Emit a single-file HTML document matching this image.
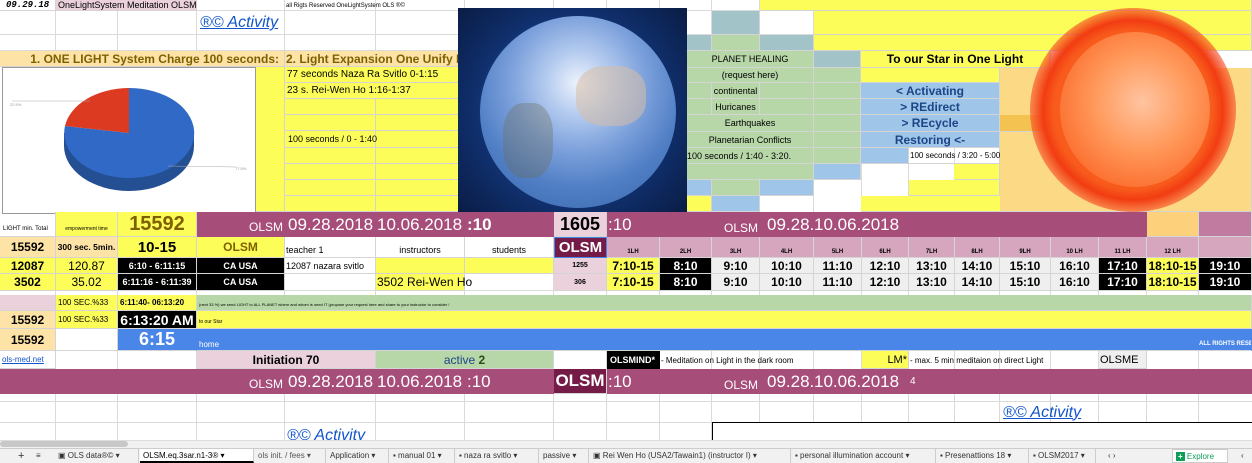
<!DOCTYPE html>
<html><head><meta charset="utf-8"><style>
*{margin:0;padding:0;box-sizing:border-box}
body{width:1252px;height:463px;overflow:hidden;background:#fff;position:relative;font-family:"Liberation Sans",Arial,sans-serif;color:#000}
.c{position:absolute;border-right:1px solid #d4d4d4;border-bottom:1px solid #d4d4d4;overflow:hidden;white-space:nowrap;display:flex;align-items:center}
.R{position:absolute;left:0;width:1252px}
.R>.c{top:0;height:100%}
.vl{position:absolute;top:0;width:1px;height:440px;background:#dadada}
.hl{position:absolute;left:0;height:1px;width:1252px;background:#dadada}
.ov{position:absolute;width:1px;background:rgba(0,0,0,.07);z-index:3}
.y{background:#fdfd5a}.g{background:#b7d7a8}.lb{background:#9fc5e8}.tl{background:#a2c4c9}.lo{background:#fde3a6}.or{background:#fcd985}
.p{background:#a64d79;color:#fff;border:0}.pk{background:#ead1dc}.dp{background:#741b47;color:#fff}.pl{background:#d5a6bd}
.bk{background:#000;color:#fff}.gr{background:#efefef}.bl{background:#4a86e8;color:#fff;border-right-color:#4a86e8}
.ctr{justify-content:center}.r{justify-content:flex-end}.b{font-weight:bold}
.t{font-size:6px;justify-content:center;font-weight:bold;align-items:flex-end;padding-bottom:2px}
.tm{font-size:12px;font-weight:bold;justify-content:center}
.tab{position:absolute;top:449px;height:14px;font-size:8px;color:#333;line-height:14px;border-right:1px solid #ccc;padding-left:3px;white-space:nowrap;overflow:hidden}
</style></head><body>
<div class="vl" style="left:55px"></div><div class="vl" style="left:117px"></div><div class="vl" style="left:196px"></div><div class="vl" style="left:284px"></div><div class="vl" style="left:375px"></div><div class="vl" style="left:464px"></div><div class="vl" style="left:553px"></div><div class="vl" style="left:606px"></div><div class="vl" style="left:659px"></div><div class="vl" style="left:711px"></div><div class="vl" style="left:759px"></div><div class="vl" style="left:813px"></div><div class="vl" style="left:861px"></div><div class="vl" style="left:908px"></div><div class="vl" style="left:954px"></div><div class="vl" style="left:999px"></div><div class="vl" style="left:1050px"></div><div class="vl" style="left:1098px"></div><div class="vl" style="left:1146px"></div><div class="vl" style="left:1198px"></div>
<div class="hl" style="top:10px"></div><div class="hl" style="top:34px"></div><div class="hl" style="top:50px"></div><div class="hl" style="top:290px"></div><div class="hl" style="top:393px"></div><div class="hl" style="top:401px"></div><div class="hl" style="top:422px"></div>

<div class="c" style="left:0;top:0;width:56px;height:11px;font:italic bold 9px 'Liberation Mono',monospace;padding-left:6px">09.29.18</div>
<div class="c pk" style="left:56px;top:0;width:141px;height:11px;font-size:9px;padding-left:2px">OneLightSystem Meditation OLSM</div>
<div class="c" style="left:285px;top:0;width:174px;height:11px;font-size:6px;padding-left:1px;border:0">all Rigts Reserved OneLightSystem OLS ®©</div>
<div class="c" style="left:200px;top:11px;width:150px;height:24px;font-size:16px;font-style:italic;color:#1155cc;text-decoration:underline;border:0">®© Activity</div>
<div class="c y" style="left:760px;top:0;width:492px;height:11px"></div>
<div class="c tl" style="left:712px;top:11px;width:48px;height:24px"></div>
<div class="c y" style="left:814px;top:11px;width:438px;height:24px"></div>
<div class="c tl" style="left:687px;top:35px;width:25px;height:16px"></div>
<div class="c g" style="left:712px;top:35px;width:48px;height:16px"></div>
<div class="c tl" style="left:760px;top:35px;width:54px;height:16px"></div>
<div class="c y" style="left:814px;top:35px;width:438px;height:16px"></div>
<div class="c lo r b" style="left:0;top:51px;width:285px;height:16px;font-size:12px;color:#7f6000;padding-right:5px">1. ONE LIGHT System Charge 100 seconds:</div>
<div class="c lo b" style="left:285px;top:51px;width:175px;height:16px;font-size:12px;color:#7f6000;padding-left:1px">2. Light Expansion One Unify Planet</div>
<div class="c y" style="left:255px;top:67px;width:30px;height:145px"></div>
<div class="c y" style="left:285px;top:67px;width:175px;height:16px;font-size:10px;padding-left:2px">77 seconds Naza Ra Svitlo 0-1:15</div>
<div class="c y" style="left:285px;top:83px;width:175px;height:16px;font-size:10px;padding-left:2px">23 s. Rei-Wen Ho 1:16-1:37</div>
<div class="c y" style="left:285px;top:99px;width:91px;height:16px"></div><div class="c y" style="left:376px;top:99px;width:84px;height:16px"></div>
<div class="c y" style="left:285px;top:115px;width:91px;height:16px"></div><div class="c y" style="left:376px;top:115px;width:84px;height:16px"></div>
<div class="c y" style="left:285px;top:131px;width:91px;height:17px;font-size:9px;padding-left:3px;overflow:visible;z-index:2">100 seconds / 0 - 1:40</div><div class="c y" style="left:376px;top:131px;width:84px;height:17px"></div>
<div class="c y" style="left:285px;top:148px;width:91px;height:16px"></div><div class="c y" style="left:376px;top:148px;width:84px;height:16px"></div>
<div class="c y" style="left:285px;top:164px;width:91px;height:16px"></div><div class="c y" style="left:376px;top:164px;width:84px;height:16px"></div>
<div class="c y" style="left:285px;top:180px;width:91px;height:16px"></div><div class="c y" style="left:376px;top:180px;width:84px;height:16px"></div>
<div class="c y" style="left:285px;top:196px;width:91px;height:16px"></div><div class="c y" style="left:376px;top:196px;width:84px;height:16px"></div>
<div style="position:absolute;left:2px;top:67px;width:254px;height:147px;background:#fff;border:1px solid #999">
<svg width="254" height="147" viewBox="2 67 254 147" style="position:absolute;left:-1px;top:-1px">
<path d="M64 133 L64 146 A65 45 0 0 0 194 146 L194 133 Z" fill="#244f93"/>
<path d="M129 133 L129 88 A65 45 0 1 1 65 126 Z" fill="#3069c6"/>
<path d="M129 133 L65 126 A65 45 0 0 1 129 88 Z" fill="#dd3a22"/>
<line x1="12" y1="101" x2="90" y2="101" stroke="#aaa" stroke-width=".6"/>
<line x1="168" y1="166" x2="236" y2="167" stroke="#aaa" stroke-width=".6"/>
<text x="10" y="106" font-size="4" fill="#999" font-family="Liberation Sans">22.5%</text>
<text x="235" y="170" font-size="4" fill="#999" font-family="Liberation Sans">77.5%</text>
</svg></div>
<div style="position:absolute;left:458px;top:8px;width:229px;height:204px;background:radial-gradient(circle at 50% 50%,#6a9ce0 0,#3d6fc4 40%,#24509c 50%,#10306e 62%,#0a1c44 100%);overflow:hidden">
<div style="position:absolute;left:22px;top:8px;width:196px;height:192px;border-radius:50%;background:radial-gradient(circle at 50% 35%,#eef3fd 0,#b4cbef 20%,#7ea2dc 42%,#5280c6 65%,#3563a8 100%)"></div>
<div style="position:absolute;left:118px;top:58px;width:70px;height:60px;border-radius:40%;background:rgba(215,190,165,.55)"></div>
<div style="position:absolute;left:45px;top:95px;width:50px;height:75px;border-radius:40%;background:rgba(110,110,90,.35)"></div>
</div>
<div class="c g ctr" style="left:687px;top:51px;width:127px;height:17px;font-size:9px">PLANET HEALING</div>
<div class="c tl" style="left:814px;top:51px;width:47px;height:17px"></div>
<div class="c y ctr b" style="left:861px;top:51px;width:189px;height:17px;font-size:12px">To our Star in One Light</div>
<div class="c g ctr" style="left:687px;top:68px;width:127px;height:15px;font-size:9px">(request here)</div><div class="c g" style="left:814px;top:68px;width:47px;height:15px"></div>
<div class="c y" style="left:861px;top:68px;width:139px;height:15px"></div>
<div class="c g" style="left:687px;top:83px;width:25px;height:16px"></div><div class="c g ctr" style="left:712px;top:83px;width:48px;height:16px;font-size:9px">continental</div><div class="c g" style="left:760px;top:83px;width:54px;height:16px"></div><div class="c g" style="left:814px;top:83px;width:47px;height:16px"></div>
<div class="c g" style="left:687px;top:99px;width:25px;height:16px"></div><div class="c g ctr" style="left:712px;top:99px;width:48px;height:16px;font-size:9px">Huricanes</div><div class="c g" style="left:760px;top:99px;width:54px;height:16px"></div><div class="c g" style="left:814px;top:99px;width:47px;height:16px"></div>
<div class="c g ctr" style="left:687px;top:115px;width:127px;height:17px;font-size:9px">Earthquakes</div><div class="c g" style="left:814px;top:115px;width:47px;height:17px"></div>
<div class="c g ctr" style="left:687px;top:132px;width:127px;height:16px;font-size:9px">Planetarian Conflicts</div><div class="c g" style="left:814px;top:132px;width:47px;height:16px"></div>
<div class="c g" style="left:687px;top:148px;width:127px;height:16px;font-size:9px">100 seconds / 1:40 - 3:20.</div><div class="c g" style="left:814px;top:148px;width:47px;height:16px"></div>
<div class="c lb ctr b" style="left:861px;top:83px;width:139px;height:16px;font-size:12px;color:#1c4587">&lt; Activating</div>
<div class="c lb ctr b" style="left:861px;top:99px;width:139px;height:16px;font-size:12px;color:#1c4587">&gt; REdirect</div>
<div class="c lb ctr b" style="left:861px;top:115px;width:139px;height:17px;font-size:12px;color:#1c4587">&gt; REcycle</div>
<div class="c lb ctr b" style="left:861px;top:132px;width:139px;height:16px;font-size:12px;color:#1c4587">Restoring &lt;-</div>
<div class="c lb" style="left:861px;top:148px;width:48px;height:16px"></div>
<div class="c" style="left:909px;top:148px;width:91px;height:16px;font-size:8px;padding-left:1px;overflow:visible;z-index:2">100 seconds / 3:20 - 5:00</div>
<div class="c g" style="left:687px;top:164px;width:127px;height:16px"></div><div class="c lb" style="left:814px;top:164px;width:47px;height:16px"></div>
<div class="c y" style="left:954px;top:164px;width:46px;height:16px"></div>
<div class="c lb" style="left:687px;top:180px;width:25px;height:16px"></div><div class="c g" style="left:712px;top:180px;width:48px;height:16px"></div><div class="c lb" style="left:760px;top:180px;width:54px;height:16px"></div>
<div class="c y" style="left:909px;top:180px;width:91px;height:16px"></div>
<div class="c y" style="left:687px;top:196px;width:25px;height:16px"></div><div class="c lb" style="left:712px;top:196px;width:48px;height:16px"></div>
<div class="c y" style="left:861px;top:196px;width:189px;height:16px"></div>
<div class="c or" style="left:1000px;top:68px;width:252px;height:144px"></div>
<div class="c" style="left:1000px;top:115px;width:50px;height:17px;background:#f3c250"></div>
<div style="position:absolute;left:1030px;top:8px;width:206px;height:204px;border-radius:50%;background:radial-gradient(circle,#ff7b2e 0,#f85a1c 55%,#f23c12 62%,rgba(245,70,30,.6) 70%,rgba(252,217,133,0) 100%)"></div>
<div style="position:absolute;left:1060px;top:32px;width:150px;height:155px;border-radius:50%;background:radial-gradient(circle at 55% 45%,#ffc4a0 0,#ff9a5c 40%,#fb6a2a 80%,#f24f1c 100%)"></div>

<div class="R" style="top:212px;height:25px">
<div class="c" style="left:0;width:56px;font-size:6px;align-items:flex-end;padding:0 0 4px 3px">LIGHT min. Total</div>
<div class="c y ctr" style="left:56px;width:62px;font-size:5px;align-items:flex-end;padding-bottom:4px">empowerment time</div>
<div class="c y ctr b" style="left:118px;width:79px;font-size:20px;color:#7f6000">15592</div>
<div class="c p" style="left:197px;width:357px"></div>
<div class="c p" style="left:197px;width:88px;justify-content:flex-end;align-items:flex-end;font-size:12px;padding:0 2px 3px 0">OLSM</div>
<div class="c p" style="left:285px;width:91px;font-size:17px;padding-left:3px">09.28.2018</div>
<div class="c p" style="left:376px;width:89px;font-size:17px;padding-left:1px">10.06.2018</div>
<div class="c p b" style="left:465px;width:89px;font-size:17px;padding-left:2px">:10</div>
<div class="c pk ctr b" style="left:554px;width:53px;font-size:18px">1605</div>
<div class="c p" style="left:607px;width:540px"></div>
<div class="c p" style="left:607px;width:53px;font-size:17px;padding-left:1px">:10</div>
<div class="c p" style="left:724px;width:36px;font-size:12px;align-items:flex-end;padding-bottom:2px">OLSM</div>
<div class="c p" style="left:767px;width:47px;font-size:17px">09.28.2</div>
<div class="c p" style="left:814px;width:95px;font-size:17px;overflow:visible">10.06.2018</div>
<div class="c" style="left:1147px;width:52px;background:#fdd17c"></div>
<div class="c" style="left:1199px;width:53px;background:#c27ba0"></div>
</div>
<div class="R" style="top:237px;height:21px">
<div class="c lo ctr b" style="left:0;width:56px;font-size:12px">15592</div>
<div class="c lo ctr b" style="left:56px;width:62px;font-size:8.5px">300 sec. 5min.</div>
<div class="c y ctr b" style="left:118px;width:79px;font-size:15px">10-15</div>
<div class="c y ctr b" style="left:197px;width:88px;font-size:12px;color:#7f6000">OLSM</div>
<div class="c" style="left:285px;width:91px;font-size:9px;align-items:flex-end;padding:0 0 2px 1px">teacher 1</div>
<div class="c ctr" style="left:376px;width:89px;font-size:9px;align-items:flex-end;padding-bottom:2px">instructors</div>
<div class="c ctr" style="left:465px;width:89px;font-size:9px;align-items:flex-end;padding-bottom:2px">students</div>
<div class="c dp ctr b" style="left:554px;width:53px;font-size:15px;border:1px solid #4a86e8">OLSM</div>
<div class="c pl t" style="left:607px;width:53px">1LH</div><div class="c pl t" style="left:660px;width:52px">2LH</div><div class="c pl t" style="left:712px;width:48px">3LH</div><div class="c pl t" style="left:760px;width:54px">4LH</div><div class="c pl t" style="left:814px;width:48px">5LH</div><div class="c pl t" style="left:862px;width:47px">6LH</div><div class="c pl t" style="left:909px;width:46px">7LH</div><div class="c pl t" style="left:955px;width:45px">8LH</div><div class="c pl t" style="left:1000px;width:51px">9LH</div><div class="c pl t" style="left:1051px;width:48px">10 LH</div><div class="c pl t" style="left:1099px;width:48px">11 LH</div><div class="c pl t" style="left:1147px;width:52px">12 LH</div><div class="c pl" style="left:1199px;width:53px"></div>
</div>
<div class="R" style="top:258px;height:16px">
<div class="c y ctr b" style="left:0;width:56px;font-size:12px">12087</div>
<div class="c y ctr" style="left:56px;width:62px;font-size:12px">120.87</div>
<div class="c bk ctr b" style="left:118px;width:79px;font-size:9px">6:10 - 6:11:15</div>
<div class="c bk ctr b" style="left:197px;width:88px;font-size:9px">CA USA</div>
<div class="c" style="left:285px;width:91px;font-size:9px;padding-left:1px">12087 nazara svitlo</div>
<div class="c y" style="left:376px;width:89px"></div><div class="c y" style="left:465px;width:89px"></div>
<div class="c pk ctr b" style="left:554px;width:53px;font-size:7px">1255</div>
<div class="c y tm" style="left:607px;width:53px">7:10-15</div><div class="c bk tm" style="left:660px;width:52px">8:10</div><div class="c gr tm" style="left:712px;width:48px">9:10</div><div class="c gr tm" style="left:760px;width:54px">10:10</div><div class="c gr tm" style="left:814px;width:48px">11:10</div><div class="c gr tm" style="left:862px;width:47px">12:10</div><div class="c gr tm" style="left:909px;width:46px">13:10</div><div class="c gr tm" style="left:955px;width:45px">14:10</div><div class="c gr tm" style="left:1000px;width:51px">15:10</div><div class="c gr tm" style="left:1051px;width:48px">16:10</div><div class="c bk tm" style="left:1099px;width:48px">17:10</div><div class="c y tm" style="left:1147px;width:52px">18:10-15</div><div class="c bk tm" style="left:1199px;width:53px">19:10</div>
</div>
<div class="R" style="top:274px;height:17px">
<div class="c y ctr b" style="left:0;width:56px;font-size:12px">3502</div>
<div class="c y ctr" style="left:56px;width:62px;font-size:12px">35.02</div>
<div class="c bk ctr b" style="left:118px;width:79px;font-size:9px">6:11:16 - 6:11:39</div>
<div class="c bk ctr b" style="left:197px;width:88px;font-size:9px">CA USA</div>
<div class="c y" style="left:376px;width:89px;font-size:12px;padding-left:1px;overflow:visible;z-index:2">3502 Rei-Wen Ho</div>
<div class="c pk ctr b" style="left:554px;width:53px;font-size:7px">306</div>
<div class="c y tm" style="left:607px;width:53px">7:10-15</div><div class="c bk tm" style="left:660px;width:52px">8:10</div><div class="c gr tm" style="left:712px;width:48px">9:10</div><div class="c gr tm" style="left:760px;width:54px">10:10</div><div class="c gr tm" style="left:814px;width:48px">11:10</div><div class="c gr tm" style="left:862px;width:47px">12:10</div><div class="c gr tm" style="left:909px;width:46px">13:10</div><div class="c gr tm" style="left:955px;width:45px">14:10</div><div class="c gr tm" style="left:1000px;width:51px">15:10</div><div class="c gr tm" style="left:1051px;width:48px">16:10</div><div class="c bk tm" style="left:1099px;width:48px">17:10</div><div class="c y tm" style="left:1147px;width:52px">18:10-15</div><div class="c bk tm" style="left:1199px;width:53px">19:10</div>
</div>
<div class="R" style="top:295px;height:16px">
<div class="c pk" style="left:0;width:56px"></div>
<div class="c y" style="left:56px;width:62px;font-size:8px;padding-left:2px">100 SEC.%33</div>
<div class="c y b" style="left:118px;width:79px;font-size:8px;padding-left:2px">6:11:40- 06:13:20</div>
<div class="c g" style="left:197px;width:1055px;font-size:4px;align-items:flex-end;padding:0 0 3px 2px">(next 33 %) we send LIGHT to ALL PLANET where and whom is need IT (propose your request here and share to your instructor to consider !</div>
</div>
<div class="R" style="top:311px;height:18px">
<div class="c lo ctr b" style="left:0;width:56px;font-size:12px">15592</div>
<div class="c y" style="left:56px;width:62px;font-size:8px;padding-left:2px">100 SEC.%33</div>
<div class="c bk ctr b" style="left:118px;width:79px;font-size:14px">6:13:20 AM</div>
<div class="c y" style="left:197px;width:1055px;font-size:5px;align-items:flex-end;padding:0 0 3px 2px">to our Star</div>
</div>
<div class="R" style="top:329px;height:22px">
<div class="c lo ctr b" style="left:0;width:56px;font-size:12px">15592</div>
<div class="c" style="left:56px;width:62px"></div>
<div class="c bl ctr b" style="left:118px;width:79px;font-size:18px">6:15</div>
<div class="c bl" style="left:197px;width:1055px;font-size:8px;align-items:flex-end;padding:0 0 1px 2px">home</div>
<div class="c bl b" style="left:1199px;width:53px;font-size:6px;align-items:flex-end;padding-bottom:3px">ALL RIGHTS RESERVED</div>
</div>
<div class="R" style="top:351px;height:18px">
<div class="c" style="left:0;width:56px;font-size:8px;color:#1155cc;text-decoration:underline;padding-left:2px">ols-med.net</div>
<div class="c pk ctr b" style="left:197px;width:179px;font-size:12px">Initiation 70</div>
<div class="c g ctr" style="left:376px;width:178px;font-size:12px;color:#1c4587">active&nbsp;<b style="color:#274e13">2</b></div>
<div class="c bk b" style="left:607px;width:53px;font-size:9px;padding-left:3px;border:0">OLSMIND*</div>
<div class="c" style="left:660px;width:202px;font-size:8px;padding-left:1px;border:0">- Meditation on Light in the dark room</div>
<div class="c y r" style="left:862px;width:47px;font-size:11px;padding-right:1px">LM*</div>
<div class="c" style="left:909px;width:190px;font-size:8px;padding-left:1px;border:0">- max. 5 min meditaion on direct Light</div>
<div class="c gr" style="left:1099px;width:48px;font-size:11px;padding-left:1px">OLSME</div>
</div>
<div class="R" style="top:369px;height:25px">
<div class="c p" style="left:0;width:1252px"></div>
<div class="c p" style="left:197px;width:88px;justify-content:flex-end;align-items:flex-end;font-size:12px;padding:0 2px 3px 0;background:none">OLSM</div>
<div class="c p" style="left:285px;width:91px;font-size:17px;padding-left:3px;background:none">09.28.2018</div>
<div class="c p" style="left:376px;width:89px;font-size:17px;padding-left:1px;background:none">10.06.2018</div>
<div class="c p" style="left:465px;width:89px;font-size:17px;padding-left:2px;background:none">:10</div>
<div class="c dp ctr b" style="left:554px;width:53px;font-size:17px">OLSM</div>
<div class="c p" style="left:607px;width:53px;font-size:17px;padding-left:1px;background:none">:10</div>
<div class="c p" style="left:724px;width:36px;font-size:12px;align-items:flex-end;padding-bottom:2px;background:none">OLSM</div>
<div class="c p" style="left:767px;width:47px;font-size:17px;background:none">09.28.2</div>
<div class="c p" style="left:814px;width:95px;font-size:17px;overflow:visible;background:none">10.06.2018</div>
<div class="c p" style="left:910px;width:20px;font-size:10px;background:none">4</div>
</div>
<div class="c" style="left:1003px;top:402px;width:120px;height:21px;font-size:16px;font-style:italic;color:#1155cc;text-decoration:underline;border:0">®© Activity</div>
<div class="c" style="left:287px;top:426px;width:120px;height:14px;font-size:16px;font-style:italic;color:#1155cc;text-decoration:underline;border:0;align-items:flex-start;line-height:20px">®© Activity</div>
<div style="position:absolute;left:712px;top:422px;width:540px;height:18px;border-top:1px solid #000;border-left:1px solid #000;background:#fff"></div>
<div style="position:absolute;left:0;top:440px;width:1252px;height:8px;background:#f1f1f1;border-top:1px solid #ddd"></div>
<div style="position:absolute;left:0;top:441px;width:128px;height:6px;background:#c8c8c8;border-radius:3px"></div>
<div style="position:absolute;left:0;top:448px;width:1252px;height:15px;background:#f1f1f1;border-top:1px solid #ccc"></div>
<div class="tab" style="left:15px;border:0;font-size:11px">+</div><div class="tab" style="left:33px;border:0">≡</div>
<div class="tab" style="left:55px;width:84px">▣ OLS data®©  ▾</div>
<div class="tab" style="left:140px;width:114px;background:#fff;color:#000;border-bottom:2px solid #000">OLSM.eq.3sar.n1-3®  ▾</div>
<div class="tab" style="left:255px;width:71px;color:#555">ols init. / fees  ▾</div>
<div class="tab" style="left:327px;width:62px">Application  ▾</div>
<div class="tab" style="left:390px;width:65px">▪ manual 01  ▾</div>
<div class="tab" style="left:456px;width:83px">▪ naza ra svitlo  ▾</div>
<div class="tab" style="left:540px;width:49px">passive  ▾</div>
<div class="tab" style="left:590px;width:201px">▣ Rei Wen Ho (USA2/Tawain1) (instructor I)  ▾</div>
<div class="tab" style="left:792px;width:144px">▪ personal illumination account  ▾</div>
<div class="tab" style="left:937px;width:92px">▪ Presenattions 18  ▾</div>
<div class="tab" style="left:1030px;width:66px">▪ OLSM2017  ▾</div>
<div class="tab" style="left:1105px;border:0">‹  ›</div>
<div class="tab" style="left:1172px;width:56px;background:#fff;border:1px solid #ccc;color:#0f9d58"><b style="background:#0f9d58;color:#fff;padding:0 2px">+</b> Explore</div>
<div class="tab" style="left:1238px;border:0">‹</div>
</body></html>
